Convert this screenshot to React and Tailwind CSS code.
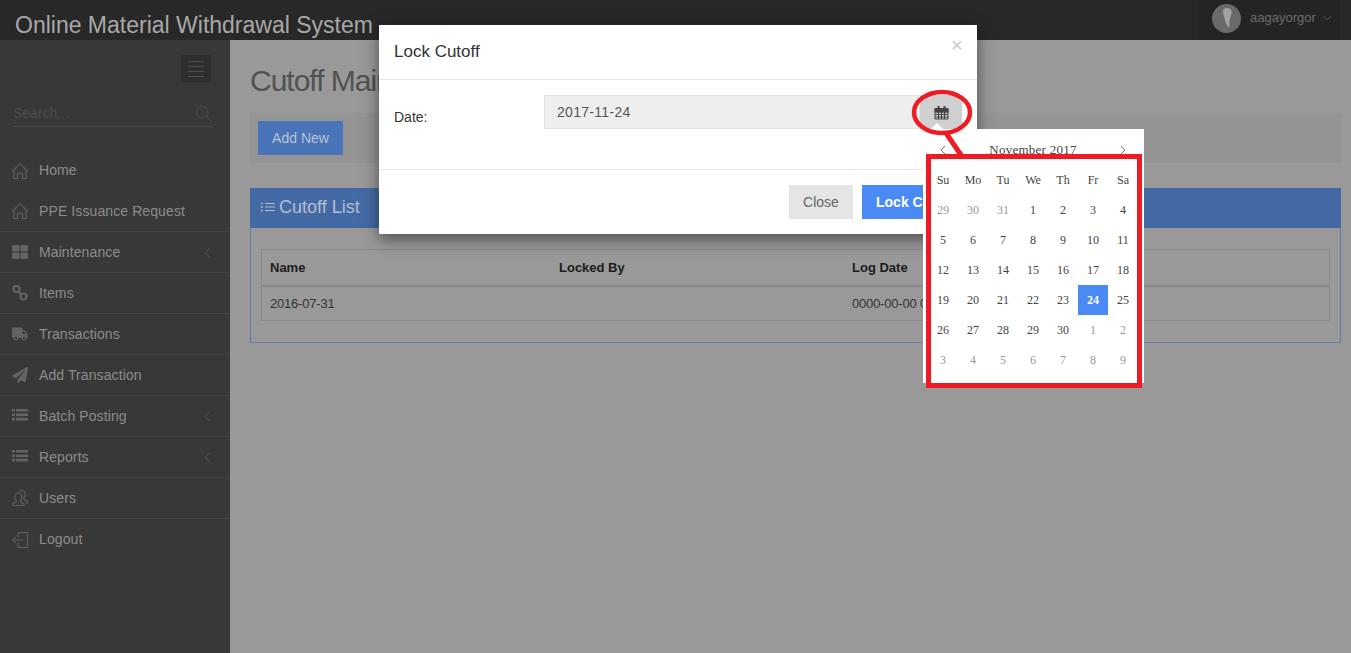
import { FaPaperPlane, FaThLarge, FaTruck } from "react-icons/fa";
import { SlArrowDown, SlArrowLeft, SlArrowRight, SlHome, SlList, SlLogout, SlMagnifier, SlPeople } from "react-icons/sl";

function ChainIcon({ size }) {
  return (
    <svg width={size} height={size} viewBox="0 0 16 16" fill="none" stroke="currentColor" strokeWidth="2.2">
      <circle cx="4.5" cy="4" r="3" />
      <circle cx="11.5" cy="11.5" r="3" />
      <path d="M6.5 6.5 L9.5 9.5" />
    </svg>
  );
}

function BarsIcon({ size }) {
  return (
    <svg width={size} height={size} viewBox="0 0 16 16" fill="currentColor">
      <path d="M0 1h3v2.6H0zM4 1h12v2.6H4zM0 5.4h3V8H0zM4 5.4h12V8H4zM0 9.8h3v2.6H0zM4 9.8h12v2.6H4z" />
    </svg>
  );
}

function CalendarIcon() {
  return (
    <svg width="15" height="15" viewBox="0 0 15 15" fill="none" stroke="currentColor" strokeWidth="1">
      <path d="M1 3.5h13v10.5H1zM1 7h13M1 9.5h13M1 12h13M4.5 7v7M7.5 7v7M10.5 7v7" />
      <path d="M1 3.5h13V7H1z" fill="currentColor" />
      <path d="M4.5 1v3M10.5 1v3" strokeWidth="2" />
    </svg>
  );
}

const menu = [
  { label: "Home", Icon: SlHome },
  { label: "PPE Issuance Request", Icon: SlHome, line: true },
  { label: "Maintenance", Icon: FaThLarge, line: true, arrow: true },
  { label: "Items", Icon: ChainIcon, line: true },
  { label: "Transactions", Icon: FaTruck, line: true },
  { label: "Add Transaction", Icon: FaPaperPlane, line: true },
  { label: "Batch Posting", Icon: BarsIcon, line: true, arrow: true },
  { label: "Reports", Icon: BarsIcon, line: true, arrow: true },
  { label: "Users", Icon: SlPeople, line: true },
  { label: "Logout", Icon: SlLogout },
];

const weekDays = ["Su", "Mo", "Tu", "We", "Th", "Fr", "Sa"];

const calendar = [
  [29, 30, 31, 1, 2, 3, 4],
  [5, 6, 7, 8, 9, 10, 11],
  [12, 13, 14, 15, 16, 17, 18],
  [19, 20, 21, 22, 23, 24, 25],
  [26, 27, 28, 29, 30, 1, 2],
  [3, 4, 5, 6, 7, 8, 9],
];

function isOtherMonth(row, day) {
  return (row === 0 && day > 20) || (row >= 4 && day < 20);
}

function Sidebar() {
  return (
    <aside className="flex w-[230px] shrink-0 flex-col bg-[#383838]">
      <div className="flex justify-end pr-[19px] pt-[15px]">
        <button type="button" className="flex h-[27px] w-[30px] flex-col items-center justify-center gap-[4px] bg-[#2e2e2e]">
          <span className="h-px w-4 bg-[#4f4f4f]" />
          <span className="h-px w-4 bg-[#4f4f4f]" />
          <span className="h-px w-4 bg-[#4f4f4f]" />
          <span className="h-px w-4 bg-[#4f4f4f]" />
        </button>
      </div>
      <div className="mx-[13px] mt-[17px] flex h-[28px] w-[200px] items-center justify-between border-b border-[#484848] pr-px pt-[2px] text-[14px] text-[#4b4b4b]">
        <span>Search...</span>
        <SlMagnifier size={16} />
      </div>
      <nav className="mt-[23px]">
        {menu.map(({ label, Icon, line, arrow }) => (
          <div key={label} className={`flex h-[41px] items-center pl-[12px] pr-[18px] text-[14px] tracking-[0.1px] text-[#8c8c8c] ${line ? "border-b border-[#424242]" : ""}`}>
            <span className="flex w-[27px] shrink-0 text-[#636363]">
              <Icon size={16} />
            </span>
            <span className="flex-1">{label}</span>
            {arrow ? <SlArrowLeft size={9} className="text-[#5a5a5a]" /> : null}
          </div>
        ))}
      </nav>
    </aside>
  );
}

function CutoffPage() {
  return (
    <main className="flex-1 bg-[#999999] px-[20px] pr-[10px] pt-[23px]">
      <h1 className="h-[50px] text-[30px] leading-[36px] tracking-[-1px] text-[#515151]">Cutoff Maintenance</h1>
      <div className="h-[50px] bg-[#949494] p-[8px]">
        <button type="button" className="h-[34px] w-[85px] bg-[#4a74b8] text-[14px] text-[#b9c3d3]">Add New</button>
      </div>
      <section className="mt-[25px] h-[155px] border border-[#5f7da8]">
        <h2 className="-m-px flex h-[40px] items-center gap-[4px] bg-[#446aa6] pb-[2px] pl-[11px] text-[18px] text-[#b3bdcd]">
          <SlList size={14} />
          Cutoff List
        </h2>
        <div className="mx-[10px] mt-[22px] border border-[#8a8a8a] text-[13px]">
          <div className="flex h-[37px] items-center border-b-2 border-[#8a8a8a] font-bold text-[#1c1c1c]">
            <span className="w-[289px] pl-[8px]">Name</span>
            <span className="w-[293px] pl-[8px]">Locked By</span>
            <span className="pl-[8px]">Log Date</span>
          </div>
          <div className="flex h-[33px] items-center tracking-[-0.2px] text-[#333333]">
            <span className="w-[289px] pl-[8px]">2016-07-31</span>
            <span className="w-[293px] pl-[8px]" />
            <span className="pl-[8px]">0000-00-00 00:00:00</span>
          </div>
        </div>
      </section>
    </main>
  );
}

function DatePicker() {
  return (
    <div className="absolute left-[544px] top-[104px] h-[254px] w-[221px] bg-white pl-[5px] pt-[6px] font-['Liberation_Serif',serif] text-[12px] text-[#444444]">
      <div className="absolute -top-[6px] left-[8px] h-0 w-0 border-x-[6px] border-b-[6px] border-x-transparent border-b-white" />
      <div className="flex h-[30px] w-[210px] items-center justify-between px-[11px]">
        <SlArrowLeft size={8} />
        <span className="text-[13px] tracking-[0.25px]">November 2017</span>
        <SlArrowRight size={8} />
      </div>
      <div className="grid w-[210px] grid-cols-7">
        {weekDays.map((day) => (
          <div key={day} className="flex h-[30px] items-center justify-center">{day}</div>
        ))}
        {calendar.map((week, row) =>
          week.map((day) => (
            <div
              key={`${row}-${day}`}
              className={`flex h-[30px] items-center justify-center ${
                row === 3 && day === 24 ? "bg-[#4a8af4] font-bold text-white" : isOtherMonth(row, day) ? "text-[#999999]" : ""
              }`}
            >
              {day}
            </div>
          ))
        )}
      </div>
    </div>
  );
}

function LockCutoffModal() {
  return (
    <div className="absolute left-[379px] top-[25px] w-[598px] bg-white font-['Liberation_Sans',sans-serif] shadow-[0_5px_15px_rgba(0,0,0,0.5)]">
      <div className="flex h-[55px] items-center justify-between border-b border-[#e5e5e5] pl-[15px] pr-[14px]">
        <h3 className="text-[17px] text-[#333333]">Lock Cutoff</h3>
        <span className="-mt-[15px] text-[21px] leading-none text-[#cccccc]">×</span>
      </div>
      <div className="flex h-[90px] items-start border-b border-[#e5e5e5] pl-[15px] pr-[15px] pt-[15px]">
        <label className="w-[150px] pt-[14px] text-[14px] leading-[16px] text-[#333333]">Date:</label>
        <div className="flex-1 flex h-[34px]">
          <div className="flex flex-1 items-center border border-[#e2e2e2] bg-[#eeeeee] px-[12px] text-[14px] tracking-[0.3px] text-[#555555]">2017-11-24</div>
          <div className="flex w-[42px] items-center justify-center bg-[#d0d0d0] text-[#444444]">
            <CalendarIcon />
          </div>
        </div>
      </div>
      <div className="flex h-[64px] items-start justify-end gap-[9px] px-[15px] pt-[15px] text-[14px]">
        <button type="button" className="h-[34px] w-[64px] bg-[#e5e5e5] text-[#666666]">Close</button>
        <button type="button" className="h-[34px] w-[100px] overflow-hidden whitespace-nowrap bg-[#4a8af4] pl-[14px] text-left font-bold text-white">Lock Cutoff</button>
      </div>
      <DatePicker />
    </div>
  );
}

export default function App() {
  return (
    <div className="relative flex h-[653px] flex-col overflow-hidden font-['Liberation_Sans',sans-serif]">
      <header className="flex h-10 shrink-0 items-center justify-between bg-[#282828] pr-[11px]">
        <div className="pl-[15px] pt-[11px] text-[23px] leading-none text-[#a8a8a8]">Online Material Withdrawal System</div>
        <div className="flex h-10 w-[141px] items-center bg-[#242424] pl-[13px] text-[13px] text-[#6b6b6b]">
          <span className="-mt-[4px] flex h-[29px] w-[29px] items-center justify-center rounded-full bg-[#6a6a6a]">
            <svg width="12" height="22" viewBox="0 0 12 22">
              <path d="M2 4 C2 0 10 0 10.500 4 C11 8 9 10 8.500 13 C8.500 16 8.500 18 8 21 C6 19 4.500 16 4 13 C3.500 10 2 8 2 4Z" fill="#a3a3a3" />
            </svg>
          </span>
          <span className="-mt-[4px] ml-[9px]">aagayorgor</span>
          <SlArrowDown size={8} className="-mt-[4px] ml-[7px]" />
        </div>
      </header>
      <div className="flex flex-1">
        <Sidebar />
        <CutoffPage />
      </div>
      <LockCutoffModal />
      <svg className="pointer-events-none absolute inset-0" width="1351" height="653" fill="none" stroke="#ed1c24">
        <ellipse cx="942" cy="112.5" rx="28" ry="20.5" strokeWidth="4.5" />
        <path d="M946 133 L963 158" strokeWidth="5" />
        <rect x="928.5" y="156.5" width="211" height="229" strokeWidth="5" />
      </svg>
    </div>
  );
}
